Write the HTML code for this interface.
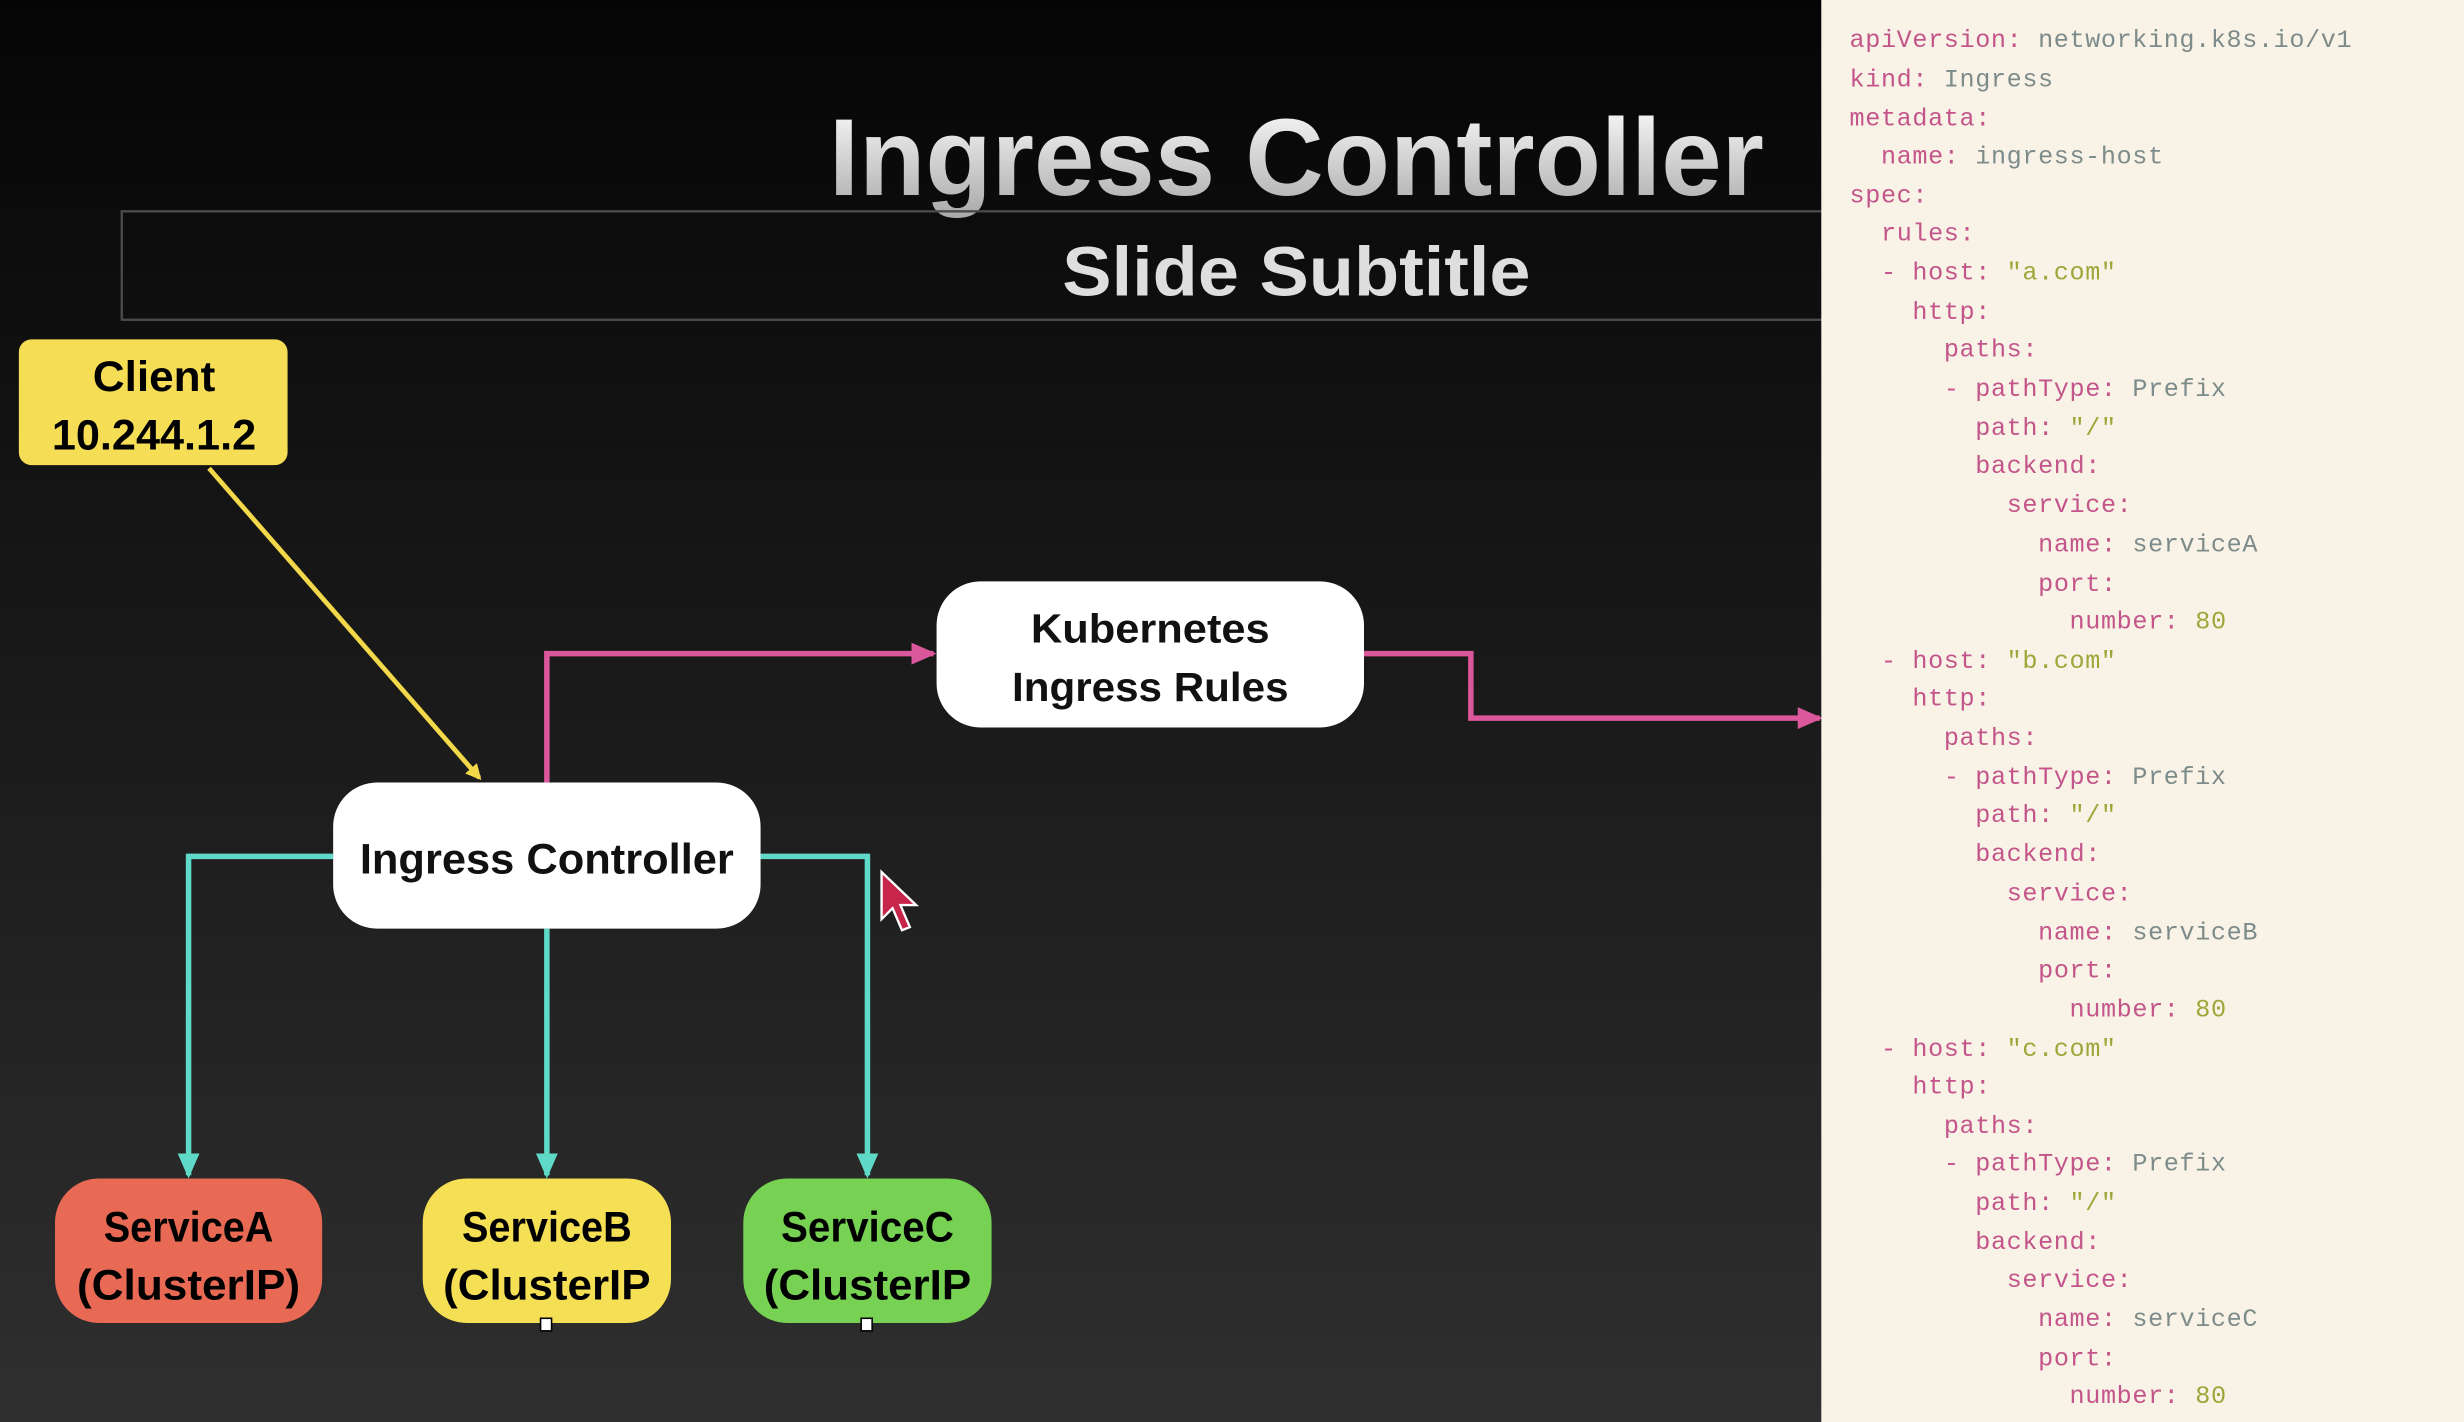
<!DOCTYPE html>
<html><head><meta charset="utf-8"><style>
html,body{margin:0;padding:0;background:#000;overflow:hidden}
svg{display:block}
.b{font-family:"Liberation Sans",sans-serif;font-weight:bold;text-anchor:middle}
.c{font-family:"Liberation Mono",monospace;font-size:16px;letter-spacing:0.4px}
.k{fill:#c4558a}.v{fill:#7d8b8b}.s{fill:#9aa83a}
</style></head><body>
<svg width="2464" height="1422" viewBox="0 0 1568 905" preserveAspectRatio="none" xmlns="http://www.w3.org/2000/svg">
<defs>
<linearGradient id="bg" x1="0" y1="0" x2="0" y2="1"><stop offset="0" stop-color="#050505"/><stop offset="0.3" stop-color="#121212"/><stop offset="1" stop-color="#2f2f2f"/></linearGradient>
<linearGradient id="tg" x1="0" y1="0" x2="0" y2="1"><stop offset="0" stop-color="#ffffff"/><stop offset="1" stop-color="#a8a8a8"/></linearGradient>
<marker id="ay" markerWidth="10" markerHeight="10" refX="8" refY="5" orient="auto" markerUnits="userSpaceOnUse"><path d="M0,0 L10,5 L0,10z" fill="#f3d84a"/></marker>
<marker id="ap" markerWidth="16" markerHeight="14" refX="14" refY="7" orient="auto" markerUnits="userSpaceOnUse"><path d="M0,0 L16,7 L0,14z" fill="#d9579a"/></marker>
<marker id="at" markerWidth="16" markerHeight="14" refX="14" refY="7" orient="auto" markerUnits="userSpaceOnUse"><path d="M0,0 L16,7 L0,14z" fill="#5fd9c8"/></marker>
</defs>
<rect width="1159" height="905" fill="url(#bg)"/>
<text class="b" x="825" y="124" font-size="70" fill="url(#tg)" textLength="595" lengthAdjust="spacingAndGlyphs">Ingress Controller</text>
<rect x="77.5" y="134.5" width="1090" height="69" fill="none" stroke="#4a4a4a" stroke-width="1.5"/>
<text class="b" x="825" y="188" font-size="44" fill="#dedede" textLength="298" lengthAdjust="spacingAndGlyphs">Slide Subtitle</text>

<rect x="12" y="216" width="171" height="80" rx="8" fill="#f5de55"/>
<text class="b" x="98" y="249" font-size="27" textLength="78" lengthAdjust="spacingAndGlyphs">Client</text>
<text class="b" x="98" y="286" font-size="27" textLength="130" lengthAdjust="spacingAndGlyphs">10.244.1.2</text>
<line x1="133" y1="298" x2="305" y2="495" stroke="#f3d84a" stroke-width="3" marker-end="url(#ay)"/>

<polyline points="348,498 348,416 594,416" fill="none" stroke="#d9579a" stroke-width="3.5" marker-end="url(#ap)"/>
<polyline points="868,416 936,416 936,457 1158,457" fill="none" stroke="#d9579a" stroke-width="3.5" marker-end="url(#ap)"/>

<polyline points="212,545 120,545 120,748" fill="none" stroke="#5fd9c8" stroke-width="3.5" marker-end="url(#at)"/>
<line x1="348" y1="591" x2="348" y2="748" stroke="#5fd9c8" stroke-width="3.5" marker-end="url(#at)"/>
<polyline points="484,545 552,545 552,748" fill="none" stroke="#5fd9c8" stroke-width="3.5" marker-end="url(#at)"/>

<rect x="596" y="370" width="272" height="93" rx="28" fill="#fff"/>
<text class="b" x="732" y="409" font-size="26" fill="#111" textLength="152" lengthAdjust="spacingAndGlyphs">Kubernetes</text>
<text class="b" x="732" y="446" font-size="26" fill="#111" textLength="176" lengthAdjust="spacingAndGlyphs">Ingress Rules</text>
<rect x="212" y="498" width="272" height="93" rx="28" fill="#fff"/>
<text class="b" x="348" y="556" font-size="27" fill="#111" textLength="238" lengthAdjust="spacingAndGlyphs">Ingress Controller</text>

<rect x="35" y="750" width="170" height="92" rx="28" fill="#e86a55"/>
<text class="b" x="120" y="790" font-size="27" textLength="108" lengthAdjust="spacingAndGlyphs">ServiceA</text>
<text class="b" x="120" y="827" font-size="27" textLength="142" lengthAdjust="spacingAndGlyphs">(ClusterIP)</text>
<rect x="269" y="750" width="158" height="92" rx="28" fill="#f5df55"/>
<text class="b" x="348" y="790" font-size="27" textLength="108" lengthAdjust="spacingAndGlyphs">ServiceB</text>
<text class="b" x="348" y="827" font-size="27" textLength="132" lengthAdjust="spacingAndGlyphs">(ClusterIP</text>
<rect x="473" y="750" width="158" height="92" rx="28" fill="#77d152"/>
<text class="b" x="552" y="790" font-size="27" textLength="110" lengthAdjust="spacingAndGlyphs">ServiceC</text>
<text class="b" x="552" y="827" font-size="27" textLength="132" lengthAdjust="spacingAndGlyphs">(ClusterIP</text>
<rect x="344" y="839" width="7" height="8" fill="#fff" stroke="#000" stroke-width="1"/>
<rect x="548" y="839" width="7" height="8" fill="#fff" stroke="#000" stroke-width="1"/>

<path d="M561,555 L561,585 L568,578 L574,592 L579,590 L573,576 L583,576 Z" fill="#c8254a" stroke="#fff" stroke-width="1.5"/>

<rect x="1159" y="0" width="409" height="905" fill="#f8f3e6"/>
<g class="c">
<text x="1177" y="30"><tspan class="k">apiVersion:</tspan> <tspan class="v">networking.k8s.io/v1</tspan></text>
<text x="1177" y="55"><tspan class="k">kind:</tspan> <tspan class="v">Ingress</tspan></text>
<text x="1177" y="80" class="k">metadata:</text>
<text x="1197" y="104"><tspan class="k">name:</tspan> <tspan class="v">ingress-host</tspan></text>
<text x="1177" y="129" class="k">spec:</text>
<text x="1197" y="153" class="k">rules:</text>
<text x="1197" y="178"><tspan class="k">- host:</tspan> <tspan class="s">"a.com"</tspan></text>
<text x="1217" y="203" class="k">http:</text>
<text x="1237" y="227" class="k">paths:</text>
<text x="1237" y="252"><tspan class="k">- pathType:</tspan> <tspan class="v">Prefix</tspan></text>
<text x="1257" y="277"><tspan class="k">path:</tspan> <tspan class="s">"/"</tspan></text>
<text x="1257" y="301" class="k">backend:</text>
<text x="1277" y="326" class="k">service:</text>
<text x="1297" y="351"><tspan class="k">name:</tspan> <tspan class="v">serviceA</tspan></text>
<text x="1297" y="376" class="k">port:</text>
<text x="1317" y="400"><tspan class="k">number:</tspan> <tspan class="s">80</tspan></text>
<text x="1197" y="425"><tspan class="k">- host:</tspan> <tspan class="s">"b.com"</tspan></text>
<text x="1217" y="449" class="k">http:</text>
<text x="1237" y="474" class="k">paths:</text>
<text x="1237" y="499"><tspan class="k">- pathType:</tspan> <tspan class="v">Prefix</tspan></text>
<text x="1257" y="523"><tspan class="k">path:</tspan> <tspan class="s">"/"</tspan></text>
<text x="1257" y="548" class="k">backend:</text>
<text x="1277" y="573" class="k">service:</text>
<text x="1297" y="598"><tspan class="k">name:</tspan> <tspan class="v">serviceB</tspan></text>
<text x="1297" y="622" class="k">port:</text>
<text x="1317" y="647"><tspan class="k">number:</tspan> <tspan class="s">80</tspan></text>
<text x="1197" y="672"><tspan class="k">- host:</tspan> <tspan class="s">"c.com"</tspan></text>
<text x="1217" y="696" class="k">http:</text>
<text x="1237" y="721" class="k">paths:</text>
<text x="1237" y="745"><tspan class="k">- pathType:</tspan> <tspan class="v">Prefix</tspan></text>
<text x="1257" y="770"><tspan class="k">path:</tspan> <tspan class="s">"/"</tspan></text>
<text x="1257" y="795" class="k">backend:</text>
<text x="1277" y="819" class="k">service:</text>
<text x="1297" y="844"><tspan class="k">name:</tspan> <tspan class="v">serviceC</tspan></text>
<text x="1297" y="869" class="k">port:</text>
<text x="1317" y="893"><tspan class="k">number:</tspan> <tspan class="s">80</tspan></text>
</g>
</svg>
</body></html>
